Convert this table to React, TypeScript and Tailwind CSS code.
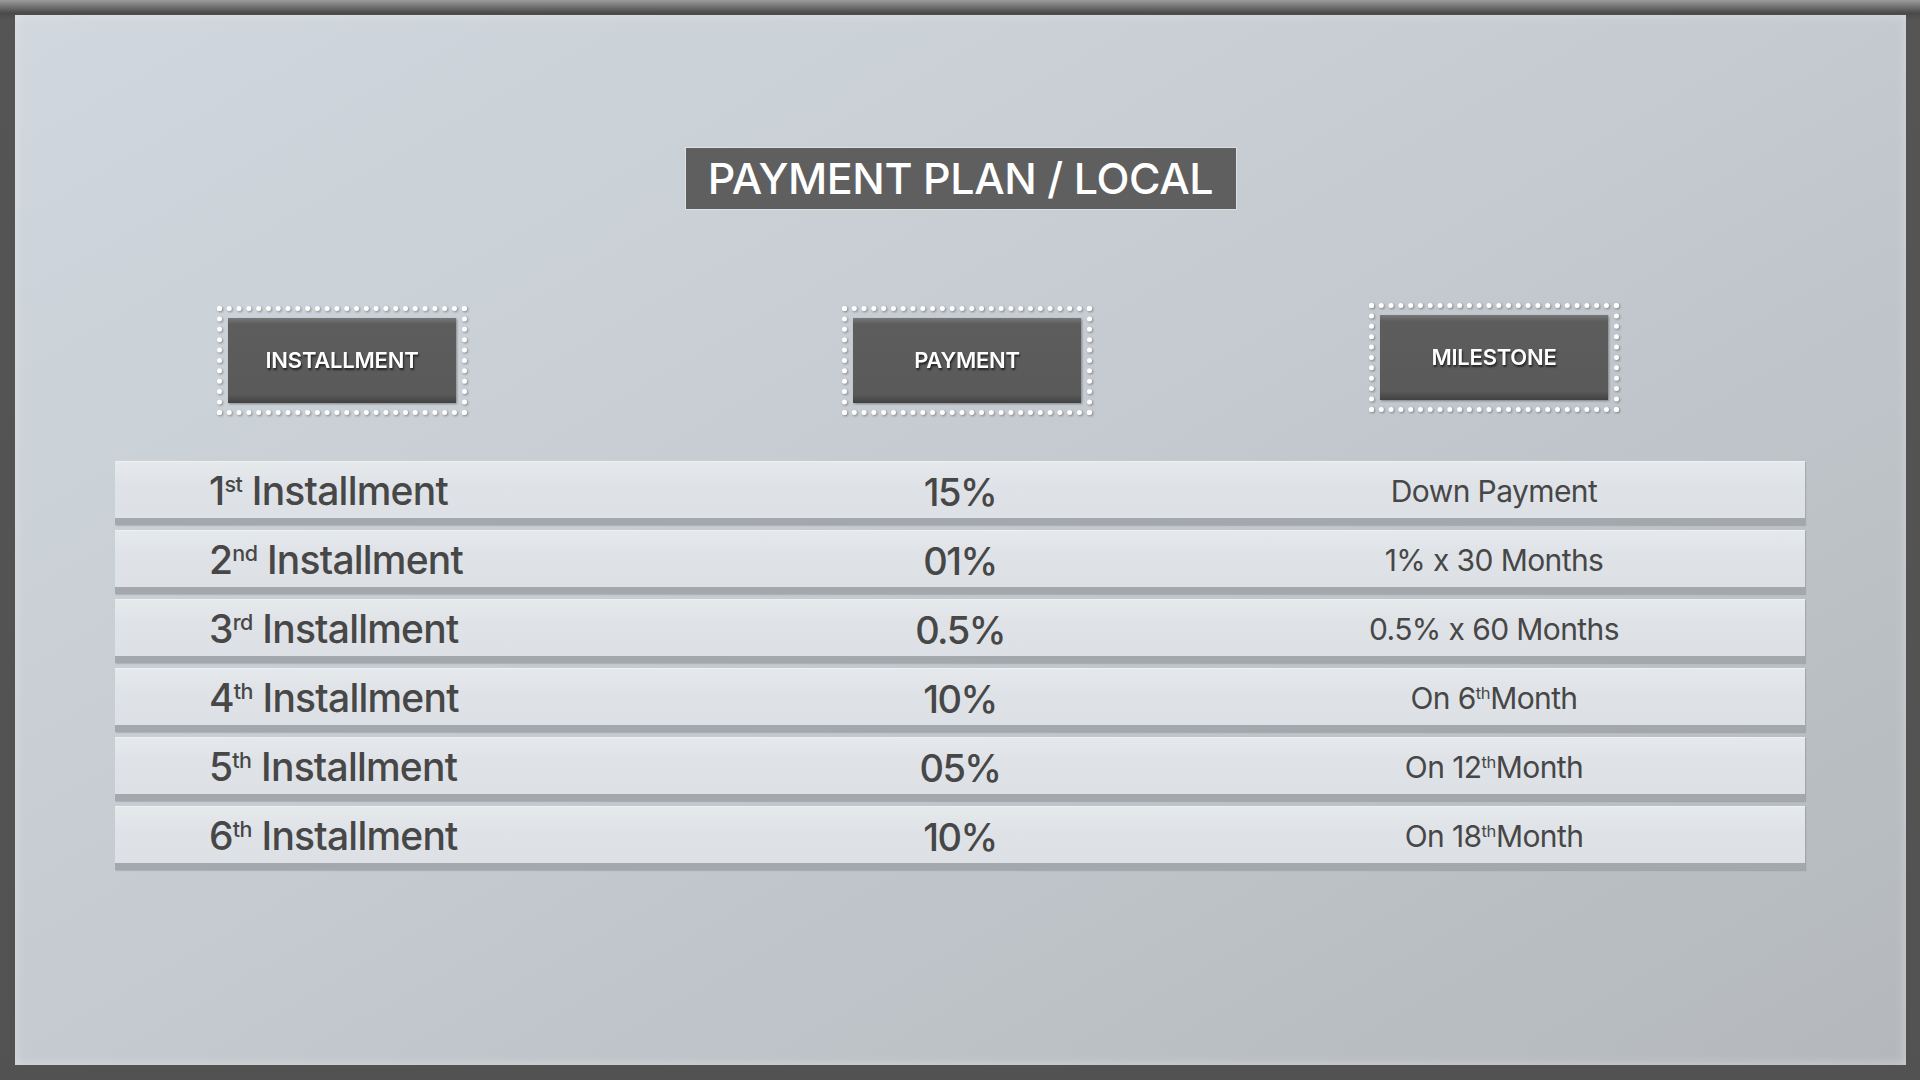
import React from 'react';

interface Row {
  num: string;
  sup: string;
  payment: string;
  milestone: React.ReactNode;
}

const Th = () => <sup className="-top-[0.62em] text-[0.55em] tracking-tight">th</sup>;

const rows: Row[] = [
  { num: '1', sup: 'st', payment: '15%', milestone: 'Down Payment' },
  { num: '2', sup: 'nd', payment: '01%', milestone: '1% x 30 Months' },
  { num: '3', sup: 'rd', payment: '0.5%', milestone: '0.5% x 60 Months' },
  {
    num: '4',
    sup: 'th',
    payment: '10%',
    milestone: (
      <>
        On 6<Th />Month
      </>
    ),
  },
  {
    num: '5',
    sup: 'th',
    payment: '05%',
    milestone: (
      <>
        On 12<Th />Month
      </>
    ),
  },
  {
    num: '6',
    sup: 'th',
    payment: '10%',
    milestone: (
      <>
        On 18<Th />Month
      </>
    ),
  },
];

function HeaderButton({ label, lift }: { label: string; lift?: boolean }) {
  return (
    <div
      className={`border-[5px] border-dotted border-white px-[6px] py-[7px] drop-shadow-[1px_1px_1px_rgba(0,0,0,0.35)] ${
        lift ? '-mt-[3px]' : ''
      }`}
    >
      <div className="flex h-[85px] w-[228px] items-center justify-center bg-[linear-gradient(to_bottom,#787878_0px,#5d5d5d_6px,#5a5a5a_76px,#424242_85px)]">
        <span className="text-[22px] font-semibold tracking-[-0.01em] text-white [text-shadow:1px_2px_2px_rgba(20,20,20,0.8)]">
          {label}
        </span>
      </div>
    </div>
  );
}

export default function App() {
  return (
    <div className="h-[1080px] w-[1920px] bg-[linear-gradient(to_bottom,#9c9c9c_0px,#4a4a4a_13px,#555555_20px,#525252_100%)] pb-[15px] pl-[15px] pr-[14px] pt-[15px] font-['Inter','Noto_Sans',sans-serif]">
      <div className="flex h-full w-full flex-col bg-[linear-gradient(150deg,#d0d7de_0%,#c7cdd3_40%,#bcc1c6_75%,#b4b8bc_100%)] shadow-[inset_0_0_12px_rgba(255,255,255,0.35)]">
        {/* Title */}
        <div className="flex justify-center pt-[133px]">
          <div className="flex h-[61px] w-[550px] items-center justify-center bg-[#5f5f5f] shadow-[0_0_0_1px_rgba(255,255,255,0.35)]">
            <h1 className="text-[43px] font-medium tracking-[-0.01em] text-white">PAYMENT PLAN / LOCAL</h1>
          </div>
        </div>

        {/* Column headers */}
        <div className="ml-[100px] mt-[97px] grid grid-cols-[454px_796px_258px] items-start">
          <div className="justify-self-center">
            <HeaderButton label="INSTALLMENT" />
          </div>
          <div className="justify-self-center">
            <HeaderButton label="PAYMENT" />
          </div>
          <div className="justify-self-center">
            <HeaderButton label="MILESTONE" lift />
          </div>
        </div>

        {/* Rows */}
        <div className="ml-[100px] mt-[46px] flex w-[1690px] flex-col gap-[5px]">
          {rows.map((row) => (
            <div
              key={row.num}
              className="grid h-[64px] grid-cols-[595px_500px_568px] items-center border-b-[7px] border-t border-b-[#a4a8ac] border-t-[#eef1f3] bg-[linear-gradient(to_bottom,#e6e9ec_0%,#dfe3e7_40%,#dde1e5_100%)] text-[#474747] shadow-[1px_1px_1px_rgba(0,0,0,0.12)]"
            >
              <div className="pb-[4px] pl-[94px] text-[39px] font-medium tracking-[-0.02em]">
                {row.num}
                <sup className="-top-[0.62em] text-[0.55em] tracking-tight">{row.sup}</sup> Installment
              </div>
              <div className="pb-[2px] text-center text-[38px] font-medium tracking-[-0.04em]">{row.payment}</div>
              <div className="pb-[3px] text-center text-[30px] tracking-[-0.02em]">{row.milestone}</div>
            </div>
          ))}
        </div>
      </div>
    </div>
  );
}
